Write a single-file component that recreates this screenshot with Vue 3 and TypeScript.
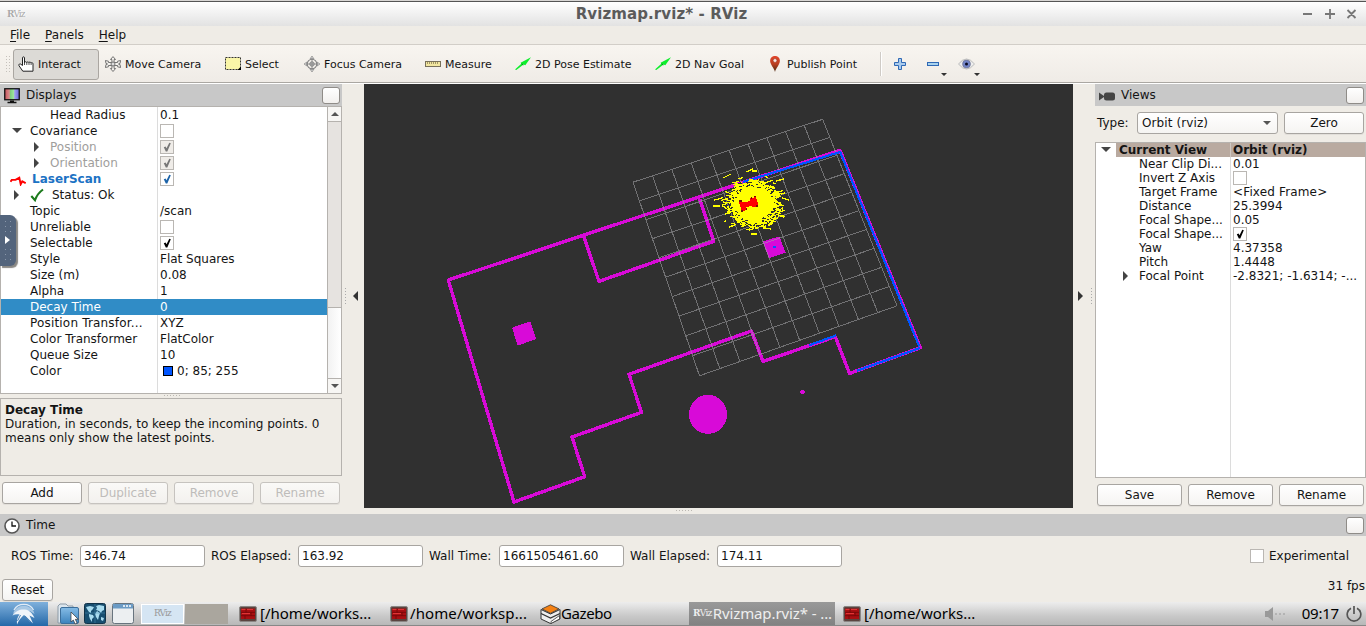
<script setup lang="ts">
interface Row {
  name: string
  value?: string
  check?: 'on' | 'off' | 'disabled' | 'blue'
  kind?: string
  arrow?: 'down' | 'right'
  icon?: string
  swatch?: boolean
}

const tools = [
  { id: 'hand', label: 'Interact', active: true },
  { id: 'move', label: 'Move Camera' },
  { id: 'select', label: 'Select' },
  { id: 'focus', label: 'Focus Camera' },
  { id: 'ruler', label: 'Measure' },
  { id: 'arrow', label: '2D Pose Estimate' },
  { id: 'arrow', label: '2D Nav Goal' },
  { id: 'pin', label: 'Publish Point' },
]

const displayRows: Row[] = [
  { name: 'Head Radius', value: '0.1', kind: 'deep' },
  { name: 'Covariance', check: 'off', arrow: 'down' },
  { name: 'Position', check: 'disabled', kind: 'deep muted', arrow: 'right' },
  { name: 'Orientation', check: 'disabled', kind: 'deep muted', arrow: 'right' },
  { name: 'LaserScan', check: 'blue', kind: 'laser', icon: 'scan' },
  { name: 'Status: Ok', kind: 'status', arrow: 'right', icon: 'ok' },
  { name: 'Topic', value: '/scan' },
  { name: 'Unreliable', check: 'off' },
  { name: 'Selectable', check: 'on' },
  { name: 'Style', value: 'Flat Squares' },
  { name: 'Size (m)', value: '0.08' },
  { name: 'Alpha', value: '1' },
  { name: 'Decay Time', value: '0', kind: 'selected' },
  { name: 'Position Transfor...', value: 'XYZ', kind: 'wide' },
  { name: 'Color Transformer', value: 'FlatColor' },
  { name: 'Queue Size', value: '10' },
  { name: 'Color', value: '0; 85; 255', swatch: true },
]

const viewRows: Row[] = [
  { name: 'Current View', value: 'Orbit (rviz)', kind: 'current', arrow: 'down' },
  { name: 'Near Clip Di...', value: '0.01' },
  { name: 'Invert Z Axis', check: 'off' },
  { name: 'Target Frame', value: '<Fixed Frame>', kind: 'wide-value' },
  { name: 'Distance', value: '25.3994' },
  { name: 'Focal Shape...', value: '0.05' },
  { name: 'Focal Shape...', check: 'on' },
  { name: 'Yaw', value: '4.37358' },
  { name: 'Pitch', value: '1.4448' },
  { name: 'Focal Point', value: '-2.8321; -1.6314; -...', arrow: 'right' },
]

const times = [
  { label: 'ROS Time:', value: '346.74' },
  { label: 'ROS Elapsed:', value: '163.92' },
  { label: 'Wall Time:', value: '1661505461.60' },
  { label: 'Wall Elapsed:', value: '174.11' },
]

// Ground grid: 10 x 10 cells, seen with a slight perspective.
type Pt = [number, number]
const lerp = (a: Pt, b: Pt, t: number): Pt => [a[0] + (b[0] - a[0]) * t, a[1] + (b[1] - a[1]) * t]
const tl: Pt = [633, 182.2], tr: Pt = [822.6, 119.3], bl: Pt = [699.5, 375.8], br: Pt = [897, 305.8]
let gridPath = ''
for (let i = 0; i <= 10; i++) {
  const t = i / 10
  const u = t * (1.03 - 0.03 * t)
  const v = t * (0.96 + 0.04 * t)
  const lines: [Pt, Pt][] = [
    [lerp(tl, tr, u), lerp(bl, br, u)],
    [lerp(tl, bl, v), lerp(tr, br, v)],
  ]
  for (const [a, b] of lines) gridPath += `M${a[0].toFixed(1)} ${a[1].toFixed(1)}L${b[0].toFixed(1)} ${b[1].toFixed(1)}`
}

// Pose cloud: short strokes scattered round the robot, with small gaps near the rim.
let seed = 7
const rnd = () => {
  seed = (seed * 1103515245 + 12345) % 2147483648
  return seed / 2147483648
}
const strokes = (count: number, pick: () => number, minLen: number, span: number) => {
  let d = ''
  for (let i = 0; i < count; i++) {
    const a = rnd() * Math.PI * 2
    const r = pick()
    const x = 754 + Math.cos(a) * 28 * r
    const y = 204.5 + Math.sin(a) * 25 * r
    const len = minLen + rnd() * span
    const slope = rnd() > 0.35 ? -0.3 : 0.35
    d += `M${(x - len / 2).toFixed(1)} ${(y - (len * slope) / 2).toFixed(1)}l${len.toFixed(1)} ${(len * slope).toFixed(1)}`
  }
  return d
}
const cloudPath = strokes(380, () => 0.55 + rnd() * 0.42 + (rnd() > 0.8 ? rnd() * 0.3 : 0), 2, 5)
const gapPath = strokes(90, () => 0.66 + rnd() * 0.34, 1, 2)
</script>

<template>
  <div class="screen">
    <svg class="defs" width="0" height="0">
      <symbol id="hand" viewBox="0 0 16 16">
        <path d="M4.500 9.500V1.800c0-1.300 2-1.300 2 0V6.500c.3-1 2-1 2.200 0 .3-.8 2-.8 2.200.1.3-.7 2-.6 2.200.3.4-.5 1.900-.4 1.900.9V15.200H4.800L1 9.700C.3 8.200 2 7.400 2.800 8.200Z" fill="#fff" stroke="#222" stroke-width="1" />
        <path d="M6.500 6v3M8.800 6.500v2.500M11 6.500v2.500M13.100 7v2" stroke="#222" stroke-width=".8" />
      </symbol>
      <symbol id="move" viewBox="0 0 16 16">
        <path d="M8 .6 10.500 3.500H9.100v3h3.500V5.200L15.600 4.500 15 7.500 13.500 8 15 8.500l.6 3-3-.7V9.500H9.100v3h1.500L8 15.500 5.400 12.500h1.500v-3H3.400v1.300l-3 .7.6-3L2.500 8 1 7.500l-.6-3 3 .7v1.300h3.500v-3H5.500Z" fill="#f4f2ee" stroke="#666" stroke-width=".9" />
        <circle cx="8" cy="8" r="2" fill="#ddd" stroke="#666" stroke-width=".9" />
      </symbol>
      <symbol id="select" viewBox="0 0 16 16">
        <rect x=".5" y="1.500" width="15" height="12" fill="#faf6a8" stroke="#333" stroke-dasharray="2 1" />
        <path d="M16 10.500V14h-3.500Z" fill="#000" />
      </symbol>
      <symbol id="focus" viewBox="0 0 16 16">
        <path d="M8 0 10 3H6ZM8 16 6 13h4ZM0 8l3-2v4ZM16 8l-3 2V6Z" fill="#ddd" stroke="#858585" stroke-width=".7" />
        <circle cx="8" cy="8" r="4.800" fill="none" stroke="#858585" stroke-width="1.100" />
        <circle cx="8" cy="8" r="2.200" fill="#ccc" stroke="#858585" />
        <path d="M8 2v12M2 8h12" stroke="#858585" stroke-width=".9" />
      </symbol>
      <symbol id="ruler" viewBox="0 0 16 16">
        <rect x=".5" y="5.500" width="15" height="5" fill="#f2e6a0" stroke="#77705a" />
        <path d="M2.500 6v2M4.500 6v2M6.500 6v2M8.500 6v2M10.500 6v2M12.500 6v2" stroke="#8d8355" stroke-width=".8" />
      </symbol>
      <symbol id="arrow" viewBox="0 0 16 16">
        <path d="M0 13.500 6.300 7.800 5.600 6.800 16 1.300 10.300 9.200 8.600 8.600 1.300 14Z" fill="#0dee2c" />
        <path d="m6.500 7.800 1.900 1.200" stroke="#087a18" stroke-width=".8" />
      </symbol>
      <symbol id="pin" viewBox="0 0 16 16">
        <path d="M8 16C7.300 12.500 3.100 8.500 3.100 4.800a4.900 4.900 0 0 1 9.800 0C12.900 8.500 8.800 12.500 8 16Z" fill="url(#pinfill)" />
        <circle cx="8" cy="4.500" r="1.900" fill="#f7e6e0" stroke="#8c2513" stroke-width=".5" />
      </symbol>
      <symbol id="scan" viewBox="0 0 16 10">
        <path d="M.5 5.800 1.800 3.900H5.500L9.300 1.800 10.700 8.300 12.300 5.300 15.700 7.200" fill="none" stroke="#f00" stroke-width="1.900" />
      </symbol>
      <symbol id="ok" viewBox="0 0 14 14">
        <path d="M1.300 8 5 12.200C6.500 7.800 9.500 4 13 1.500" fill="none" stroke="#1c7a1c" stroke-width="2.100" />
      </symbol>
      <symbol id="tick" viewBox="0 0 14 14">
        <path d="M3.800 7.300 5.600 6.600 6.500 8.300 9.300 2.800 10.800 3.300 7.300 11.500H5.800Z" fill="currentColor" />
      </symbol>
      <symbol id="terminal" viewBox="0 0 18 16">
        <rect x=".5" y=".5" width="17" height="15" rx="1.500" fill="#5b4440" stroke="#8a8684" />
        <rect x="2" y="2.500" width="14" height="10.500" fill="#a80f12" />
        <path d="M2 6.300h14M2 9.700h14M7 2.500v3.800M12 6.300v3.400M6 9.700V13" stroke="#700709" stroke-width=".8" />
        <path d="M2.500 3.500h4M8 3.500h6M3 7.500h8" stroke="#e03535" stroke-width="1" />
      </symbol>
      <linearGradient id="pinfill" x1="0" y1="0" x2="0" y2="1">
        <stop offset="0" stop-color="#e2452b" />
        <stop offset=".5" stop-color="#bc3e20" />
        <stop offset="1" stop-color="#4a2a12" />
      </linearGradient>
    </svg>

    <header class="titlebar">
      <span class="mini-logo"><b>R</b>Viz</span>
      <h1>Rvizmap.rviz* - RViz</h1>
      <svg class="win-buttons" width="56" height="14" viewBox="0 0 56 14">
        <path d="M1 7h9M23 7h10M28 2v10M45.500 3l8 8M53.500 3l-8 8" stroke="#777" stroke-width="1.800" />
      </svg>
    </header>

    <nav class="menubar"><span><u>F</u>ile</span><span><u>P</u>anels</span><span><u>H</u>elp</span></nav>

    <div class="toolbar">
      <div class="grip"></div>
      <div class="tools">
        <div v-for="t in tools" :key="t.label" class="tool" :class="{ active: t.active }">
          <svg width="16" height="16"><use :href="'#' + t.id" /></svg>
          <span>{{ t.label }}</span>
        </div>
      </div>
      <svg class="extra" width="106" height="32" viewBox="0 0 106 32">
        <path d="M.5 4v24" stroke="#cfcbc6" /><path d="M1.500 4v24" stroke="#fff" />
        <path d="M18.500 10.500h3v4h4v3h-4v4h-3v-4h-4v-3h4Z" fill="#a9cbee" stroke="#2f68b4" />
        <rect x="47.500" y="14.500" width="11" height="3" fill="#a9d3ee" stroke="#2f68b4" />
        <path d="M61 25h6l-3 3ZM94 25h6l-3 3Z" fill="#333" />
        <path d="M78.500 16q8-10 16 0-8 10-16 0Z" fill="#eee" stroke="#bbb" />
        <circle cx="86.500" cy="16" r="4" fill="#7385c8" stroke="#667" stroke-width=".5" />
        <circle cx="86.500" cy="16" r="1.500" fill="#0a0a20" />
      </svg>
    </div>

    <main class="workspace">
      <section class="displays">
        <div class="dock-title">
          <svg class="dock-icon" width="16" height="16" viewBox="0 0 16 16">
            <defs>
              <linearGradient id="monitor">
                <stop offset="0" stop-color="#c8545c" /><stop offset=".32" stop-color="#d98c8c" />
                <stop offset=".36" stop-color="#7cc97c" /><stop offset=".64" stop-color="#a0e8a0" />
                <stop offset=".68" stop-color="#a0a0f0" /><stop offset="1" stop-color="#6a6ad8" />
              </linearGradient>
            </defs>
            <rect x=".75" y=".75" width="14.500" height="11" fill="url(#monitor)" stroke="#111" stroke-width="1.300" />
            <path d="M6 12.500h4v1.300h2.500v1.500h-9v-1.500H6Z" fill="#111" />
          </svg>
          <span>Displays</span><i class="dock-btn"></i>
        </div>
        <div class="tree left-tree">
          <div class="rows">
            <div v-for="r in displayRows" :key="r.name" class="row" :class="r.kind">
              <div class="name">
                <i v-if="r.arrow" class="tri" :class="r.arrow"></i>
                <svg v-if="r.icon" :class="r.icon" :width="r.icon === 'ok' ? 14 : 16" :height="r.icon === 'ok' ? 14 : 10"><use :href="'#' + r.icon" /></svg>
                {{ r.name }}
              </div>
              <div class="value">
                <i v-if="r.check" class="check" :class="r.check"><svg v-if="r.check !== 'off'" width="14" height="14"><use href="#tick" /></svg></i>
                <i v-if="r.swatch" class="swatch"></i>{{ r.value }}
              </div>
            </div>
          </div>
          <div class="scroll"><i class="up"></i><b class="thumb"></b><b class="track"></b><i class="dn"></i></div>
        </div>
        <div class="dots-h"></div>
        <div class="desc"><b>Decay Time</b><br>Duration, in seconds, to keep the incoming points. 0 means only show the latest points.</div>
        <div class="buttons"><button>Add</button><button disabled>Duplicate</button><button disabled>Remove</button><button disabled>Rename</button></div>
      </section>

      <div class="gutter left"><i class="dots-v"></i><i class="fold"></i></div>

      <section class="center">
        <svg class="scene" width="709" height="424" viewBox="364 84 709 424" shape-rendering="crispEdges">
          <g fill="none" stroke="#d80ad8" stroke-width="3.400" stroke-linejoin="round">
            <path d="M448.300 280 840 150.300 920.300 347.700 849.500 373.500 835.300 336.700 763 361.500 751.500 331 629 374.300 641.500 412.300 572 437 584.700 476.700 514 502Z" />
            <path d="M583.500 235.500 599 281.300 713.700 241.300 699.700 199" />
          </g>
          <g fill="#d80ad8">
            <path d="M512 327.700 530.300 321.300 536 339 517.700 345.700Z" />
            <path d="M762.700 241.700 779.300 236.300 785.700 252.700 769 258.300Z" />
            <ellipse cx="708" cy="414.300" rx="19" ry="19.500" />
            <path d="M801 390h3v1h1v2h-1v1h-3v-1h-1v-2h1Z" />
          </g>
          <path :d="gridPath" fill="none" stroke="#a0a0a4" stroke-opacity=".58" />
          <path d="M743 182 840 152M840 151.500 919.200 346.500M857 370.700 920 348M809 345.300 836 335.500" fill="none" stroke="#0055ff" stroke-width="2.200" />
          <path d="M773 246h3v2h-3Z" fill="#0055ff" />
          <path d="M731 194 736 187 745 183 753 184 761 184 767 188 772 190 770 194 774 197 776 205 771 211 770 217 763 219 759 225 750 227 741 224 735 220 733 213 730 207 734 200Z" fill="#ff0" />
          <path :d="cloudPath" fill="none" stroke="#ff0" stroke-width="1.300" />
          <path :d="gapPath" fill="none" stroke="#303030" stroke-width="1" />
          <path d="M723 178 731 174M746 172 753 169M752 171 757 171M714 200 719 199M713 206 720 206M776 181 784 179M782 198 789 200M763 228 771 229M751 234 757 234M729 227 735 225" stroke="#ff0" stroke-width="1.300" />
          <path d="M739 202 746 202.500 749.500 201 750 198.500 756 197 758.500 206 753 207 750 206 746.500 207.500 746 210 742 211.500Z" fill="#f00" />
          <path d="M739 201h3M754 196.500h2M756 206h2M741 211h2M746 209h1M751 198h1" stroke="#701005" stroke-width="1.200" />
        </svg>
        <div class="dots-h"></div>
      </section>

      <div class="gutter right"><i class="fold"></i><i class="dots-v"></i></div>

      <section class="views">
        <div class="dock-title">
          <svg class="dock-icon cam" width="16" height="16" viewBox="0 0 16 16">
            <path d="M0 4.500 5 8v1l-5 3.500Z" fill="#444" /><rect x="5" y="4.500" width="11" height="8" rx="2.500" fill="#444" />
          </svg>
          <span>Views</span><i class="dock-btn"></i>
        </div>
        <div class="type-row"><span>Type:</span><div class="combo"><em>Orbit (rviz)</em><i class="tri down"></i></div><button>Zero</button></div>
        <div class="tree right-tree">
          <div class="rows">
            <div v-for="(r, i) in viewRows" :key="i" class="row" :class="r.kind">
              <div class="name"><i v-if="r.arrow" class="tri" :class="r.arrow"></i>{{ r.name }}</div>
              <div class="value"><i v-if="r.check" class="check" :class="r.check"><svg v-if="r.check !== 'off'" width="14" height="14"><use href="#tick" /></svg></i>{{ r.value }}</div>
            </div>
          </div>
        </div>
        <div class="buttons"><button>Save</button><button>Remove</button><button>Rename</button></div>
      </section>
    </main>

    <section class="time">
      <div class="dock-title">
        <svg class="dock-icon" width="16" height="16" viewBox="0 0 16 16">
          <circle cx="8" cy="8" r="7" fill="#fff" stroke="#555" stroke-width="1.600" /><path d="M8 3.500V8h4" fill="none" stroke="#111" stroke-width="1.300" />
        </svg>
        <span>Time</span><i class="dock-btn"></i>
      </div>
      <div class="fields">
        <template v-for="t in times" :key="t.label"><label>{{ t.label }}</label><div class="input">{{ t.value }}</div></template>
        <i class="check off"></i><span class="exp">Experimental</span>
      </div>
      <div class="foot"><button>Reset</button><span>31 fps</span></div>
    </section>

    <footer class="taskbar">
      <svg class="launchers" width="228" height="24" viewBox="0 0 228 24">
        <defs>
          <linearGradient id="start" x1="0" y1="0" x2="0" y2="1"><stop offset="0" stop-color="#7fb0dc" /><stop offset="1" stop-color="#2468a8" /></linearGradient>
          <linearGradient id="fold" x1="0" y1="0" x2="0" y2="1"><stop offset="0" stop-color="#86bce6" /><stop offset="1" stop-color="#3c83bd" /></linearGradient>
        </defs>
        <rect width="48" height="24" fill="url(#start)" />
        <path d="M13 12A11 10.500 0 0 1 34.500 12L30 9 20 8Z" fill="#a9c8e4" />
        <path d="M12.500 13.500C16 8.500 20 7 25 7.500 29 8 32 10.500 34.500 16L29.500 13.500 33 21.500 26.500 15 24 13C21 15.500 18.500 18.500 17 22.500 16.500 18 17.500 15 19.500 12.500 17 12 14.500 12.500 12.500 13.500Z" fill="#f0f5fa" />
        <path d="M14 8C18 .5 29.500.5 33.500 8" stroke="#e2ecf6" stroke-width="1.300" fill="none" />
        <path d="M25 14 30 20M20.500 13 17.500 19" stroke="#4d84b8" stroke-width="1" />
        <path d="M58 21V4l2-2h6l2 2h5v17Z" fill="#dce6ee" stroke="#8c9aa6" />
        <rect x="60.500" y="5.500" width="18" height="16" rx="1.500" fill="url(#fold)" stroke="#3c6f9c" />
        <path d="M71 10v10l2.300-2 1.800 4 2-1-1.800-3.700h3Z" fill="#fff" stroke="#333" stroke-width=".7" />
        <rect x="84.500" y="1.500" width="21" height="20" rx="2" fill="#174e70" stroke="#123349" />
        <path d="M86 5l4-1 4 1-1 2-2 2v2l-2-1-2-3ZM96 4l3-1 5 1v4l-2 1-1 2-2-2-3-1 1-2ZM89 12l4 1 1 2-2 2v3l-2-3-1-3ZM97 9l3 2-1 3-1 4-2-3-1-3ZM101 15l3 1-1 3-2-1Z" fill="#a9dcf0" />
        <path d="M85 11h20M95 2v19" stroke="#4f93b4" stroke-width=".5" />
        <rect x="112.500" y="1.500" width="21" height="20" rx="2" fill="#eceff1" stroke="#68747e" />
        <path d="M113 2h20v4.500h-20Z" fill="#6b9bc5" /><path d="M123 4h2m1 0h2m1 0h2" stroke="#fff" stroke-width="1.500" />
        <rect x="141.500" y="2.500" width="42" height="19" fill="#d5e5f3" stroke="#fff" />
        <rect x="185" y="2" width="43" height="20" fill="#aaa69e" />
        <text x="154" y="14" class="pager">RViz</text>
      </svg>
      <div class="task t1"><svg width="18" height="16"><use href="#terminal" /></svg><span>[/home/works...</span></div>
      <div class="task t2"><svg width="18" height="16"><use href="#terminal" /></svg><span>/home/worksp...</span></div>
      <div class="task t3">
        <svg width="21" height="20" viewBox="0 0 21 20">
          <path d="M1 5.500 10.500 10 20 5.500V15L10.500 19.500 1 15Z" fill="#eee" stroke="#333" stroke-width="1" />
          <path d="M1 9.500 10.500 14 20 9.500" fill="none" stroke="#333" stroke-width="1.300" />
          <path d="M10.500 .8 19 4.900 10.500 9.300 2 4.900Z" fill="#f58113" stroke="#333" stroke-width=".8" />
          <path d="M11 17.500 19.500 11.500v3.500L11 19.500Z" fill="#fff" stroke="#333" stroke-width=".8" />
        </svg><span>Gazebo</span>
      </div>
      <div class="task t4"><span class="rviz"><b>R</b>Viz</span><span>Rvizmap.rviz* - ...</span></div>
      <div class="task t5"><svg width="18" height="16"><use href="#terminal" /></svg><span>[/home/works...</span></div>
      <div class="tray">
        <svg width="22" height="14" viewBox="0 0 22 14"><path d="M0 4h3l5-4v14l-5-4H0Z" fill="#999" /><path d="M10 7h2m2 0h2m2 0h2" stroke="#999" stroke-width="1.200" /></svg>
        <span class="clock">09:17</span>
        <svg width="16" height="16" viewBox="0 0 16 16"><path d="M5 2.200a6.800 6.800 0 1 0 6 0M8 0v8" fill="none" stroke="#555" stroke-width="1.700" /></svg>
      </div>
    </footer>

    <aside class="drawer"><i></i></aside>
  </div>
</template>

<style scoped>
* { box-sizing: border-box; }
.screen { position: relative; width: 1366px; height: 626px; overflow: hidden; background: #efece6; color: #141414; font: 12px/14px "DejaVu Sans", sans-serif; }
.defs { position: absolute; }
svg { display: block; flex: none; }
i, b.thumb, b.track { flex: none; }
.titlebar { height: 26px; display: flex; align-items: center; padding: 1px 8px 0 7px; border-top: 1px solid #d8d6d4; background: linear-gradient(#555 0 1px, #fff 1px, #e2e2e2); }
.titlebar h1 { flex: 1; margin: 0; font-size: 15px; line-height: 18px; color: #5b5b5b; letter-spacing: .1px; text-align: center; padding: 0 8px 0 0; }
.mini-logo { width: 22px; font: 9px/12px "DejaVu Serif", serif; color: #aaa; letter-spacing: -1px; text-shadow: 1px 0 0 #fff; }
.menubar { height: 19px; display: flex; gap: 15px; padding: 1px 0 0 10px; line-height: 17px; border-bottom: 1px solid #d2cec8; }
.menubar u { text-underline-offset: 2px; }
.toolbar { height: 39px; display: flex; align-items: center; background: linear-gradient(#f8f5f0, #efebe6); border-bottom: 1px solid #fff; box-shadow: inset 0 -1px #aaa7a2; }
.grip { width: 5px; height: 18px; margin: 0 3px 0 5px; background: radial-gradient(circle, #c5c1bb 0 .7px, transparent .8px) 0 0 / 3px 3px; }
.tools { display: grid; grid-template-columns: 87px 120px 78px 122px 90px 140px 112px 118px; font-size: 11px; }
.tool { height: 31px; display: flex; align-items: center; gap: 4px; padding-left: 5px; white-space: nowrap; }
.tool span { padding-top: 1px; }
.tool:nth-child(4) { padding-left: 6px; }
.tool.active { margin-right: 1px; padding-left: 4px; border: 1px solid #aaa6a1; border-radius: 3px; background: #dcdad6; }
.workspace { height: 430px; display: flex; }
.dock-title { height: 22px; flex: none; display: flex; align-items: center; background: #c8c8c8; padding: 0 2px 0 4px; }
.dock-icon { margin: 1px 6px 0 0; }
.dock-title span { flex: 1; }
.dock-btn { width: 18px; height: 17px; border: 1px solid #8f8c88; border-radius: 3px; background: linear-gradient(#fff, #f2f0ee); }
.displays { width: 342px; display: flex; flex-direction: column; }
.tree { display: flex; border: 1px solid #b5b2ae; background: #fff; }
.left-tree { height: 288px; }
.rows { flex: 1; min-width: 0; }
.left-tree .rows { background: linear-gradient(90deg, transparent 156px, #dcdcdc 156px 157px, transparent 157px); }
.row { display: flex; height: 16px; line-height: 16px; white-space: pre; }
.name { width: 157px; flex: none; position: relative; padding-left: 29px; white-space: nowrap; }
.value { flex: 1; display: flex; align-items: center; padding-left: 2px; white-space: nowrap; }
.wide .name { letter-spacing: .18px; }
.wide-value .value { letter-spacing: .15px; }
.deep .name { padding-left: 49px; }
.muted .name { color: #a09e9c; }
.laser .name { padding-left: 31px; font-weight: bold; color: #1c72c4; }
.status .name { padding-left: 51px; }
.selected { background: #308cc6; color: #fff; }
.name .scan { position: absolute; left: 9px; top: 5px; }
.name .ok { position: absolute; left: 29px; top: 1px; }
.tri { width: 0; height: 0; border: 5px solid transparent; }
.tri.down { border-width: 5px 5px 0; border-top-color: #444; }
.tri.right { border-width: 5px 0 5px 6px; border-left-color: #444; }
.name .tri { position: absolute; left: 11px; top: 5px; }
.name .tri.right { left: 13px; top: 3px; border-left-width: 5px; }
.deep .name .tri.right { left: 33px; }
.check { width: 14px; height: 14px; border: 1px solid #bab7b3; background: #fff; color: #000; }
.check svg { margin: -1px; }
.check.disabled { background: #efece8; color: #777; }
.check.blue { color: #1c63a8; }
.swatch { width: 10px; height: 10px; border: 1px solid #000; background: #05f; margin: 0 4px 0 3px; }
.scroll { width: 14px; display: flex; flex-direction: column; align-items: center; border-left: 1px solid #b5b2ae; background: #fff; }
.scroll i { height: 14px; width: 13px; display: flex; align-items: center; justify-content: center; background: #f7f6f4; }
.scroll i::after { content: ""; border: 4px solid transparent; border-bottom-color: #555; margin-top: -4px; }
.scroll i.dn::after { border-color: #555 transparent transparent; margin: 4px 0 0; }
.thumb { width: 13px; height: 187px; background: #e6e3e0; border: solid #b5b2ae; border-width: 1px 0; }
.scroll .track { flex: 1; width: 13px; background: linear-gradient(90deg, #f2f2f2, #fff); border-bottom: 1px solid #b5b2ae; }
.dots-h { width: 18px; height: 1px; margin: 1px auto; flex: none; background: repeating-linear-gradient(90deg, #bbb8b2 0 1px, transparent 1px 3px); }
.displays .dots-h { margin: 1px 0 2px 164px; }
.desc { height: 78px; padding: 4px 16px 0 4px; border: 1px solid #b5b2ae; }
.buttons { display: flex; gap: 6px; padding: 6px 2px 0; }
button { flex: 1; height: 22px; padding: 0; border: 1px solid #a8a5a1; border-radius: 3px; background: linear-gradient(#fff, #f5f4f2); color: #141414; font: inherit; line-height: 19px; text-align: center; box-shadow: 0 1px #e2dfda; }
button:disabled { color: #bebcba; border-color: #c6c3bf; background: linear-gradient(#faf9f7, #f3f1ee); }
.gutter { width: 22px; position: relative; display: flex; align-items: center; padding-bottom: 7px; }
.gutter.left { padding-left: 3px; gap: 8px; }
.gutter.right { padding-left: 5px; gap: 8px; }
.dots-v { width: 1px; height: 16px; background: repeating-linear-gradient(#aaa 0 1px, transparent 1px 3px); }
.fold { border: solid transparent; border-width: 5px 5px 5px 0; border-right-color: #333; margin-left: -1px; }
.right .fold { border-width: 5px 0 5px 5px; border-right-color: transparent; border-left-color: #333; margin-left: 0; }
.center { width: 709px; }
.scene { background: #303030; margin-bottom: 2px; }
.center .dots-h { margin-left: 312px; }
.views { width: 271px; display: flex; flex-direction: column; }
.type-row { height: 36px; padding: 6px 2px 8px 2px; display: flex; line-height: 21px; }
.type-row span { width: 40px; padding-top: 1px; }
.combo { width: 141px; height: 22px; display: flex; align-items: center; justify-content: space-between; padding: 0 6px 0 4px; margin-right: 6px; border: 1px solid #a8a5a1; border-radius: 3px; background: linear-gradient(#fff, #f5f4f2); }
.combo em { font-style: normal; letter-spacing: .1px; line-height: 20px; }
.combo .tri { border-width: 4px 4px 0; border-top-color: #555; }
.type-row button { flex: none; width: 80px; }
.right-tree { height: 336px; }
.right-tree .rows { background: linear-gradient(90deg, transparent 134px, #dcdcdc 134px 135px, transparent 135px); }
.right-tree .row { height: 14px; line-height: 14px; }
.right-tree .name { width: 135px; padding-left: 43px; }
.right-tree .name .tri.right { left: 27px; top: 2px; }
.right-tree .current { font-weight: bold; background: linear-gradient(90deg, #fff 20px, #b9aaa0 20px 134px, #cfc8c2 134px 135px, #b9aaa0 135px); }
.right-tree .current .name { padding-left: 23px; }
.right-tree .current .name .tri { left: 5px; top: 4px; }
.time { height: 88px; }
.fields { height: 43px; display: flex; align-items: center; padding: 0 17px 3px 11px; }
.fields label { white-space: nowrap; width: 69px; }
.fields label:nth-of-type(2) { width: 87px; }
.fields label:nth-of-type(3) { width: 70px; }
.fields label:nth-of-type(4) { width: 87px; }
.input { width: 125px; height: 22px; margin-right: 6px; padding-left: 3px; line-height: 20px; border: 1px solid #a8a5a1; border-radius: 3px; background: #fff; }
.fields .check { margin-left: auto; }
.exp { margin-left: 5px; }
.foot { height: 23px; display: flex; justify-content: space-between; padding: 0 1px 0 2px; line-height: 14px; }
.foot button { flex: none; width: 51px; }
.taskbar { height: 24px; display: flex; background: linear-gradient(#ededed, #c9c9c9 60%, #b8b8b8); border-bottom: 1px solid #888; font: 15px/22px "Noto Sans", sans-serif; color: #000; }
.pager { font: 9px "DejaVu Serif", serif; letter-spacing: -.9px; fill: #999; }
.task { display: flex; align-items: center; white-space: nowrap; gap: 3px; }
.task > span { padding-bottom: 1px; }
.t1 { margin-left: 11px; width: 151px; }
.t2 { width: 150px; gap: 2px; letter-spacing: .1px; }
.t3 { width: 149px; gap: 0; letter-spacing: -.4px; }
.t4 { width: 146px; gap: 1px; padding-left: 4px; background: linear-gradient(#999, #828282); color: #eee; letter-spacing: -.1px; }
.t5 { margin-left: 8px; }
.rviz { font: 9px/22px "DejaVu Serif", serif; letter-spacing: -.7px; }
.tray { margin-left: auto; display: flex; align-items: center; gap: 0; padding-right: 4px; }
.clock { margin: 0 7px 0 15px; padding-bottom: 1px; letter-spacing: -.2px; }
.drawer { position: absolute; left: 0; top: 215px; width: 16px; height: 51px; border-radius: 0 6px 6px 0; background: #53647c; box-shadow: 2px 2px 1px #8a8884; display: flex; align-items: center; padding-left: 5px; }
.drawer i { width: 0; height: 0; margin-bottom: 1px; border: solid transparent; border-width: 4px 0 4px 5px; border-left-color: #fff; }
.drawer::before, .drawer::after { content: ""; position: absolute; left: 3px; width: 9px; height: 15px; background: radial-gradient(circle, #8a97aa .8px, transparent 1px) 0 0 / 5px 5px; }
.drawer::before { top: 4px; }
.drawer::after { bottom: 4px; }
</style>

<style>
body { overflow: hidden; }
</style>
